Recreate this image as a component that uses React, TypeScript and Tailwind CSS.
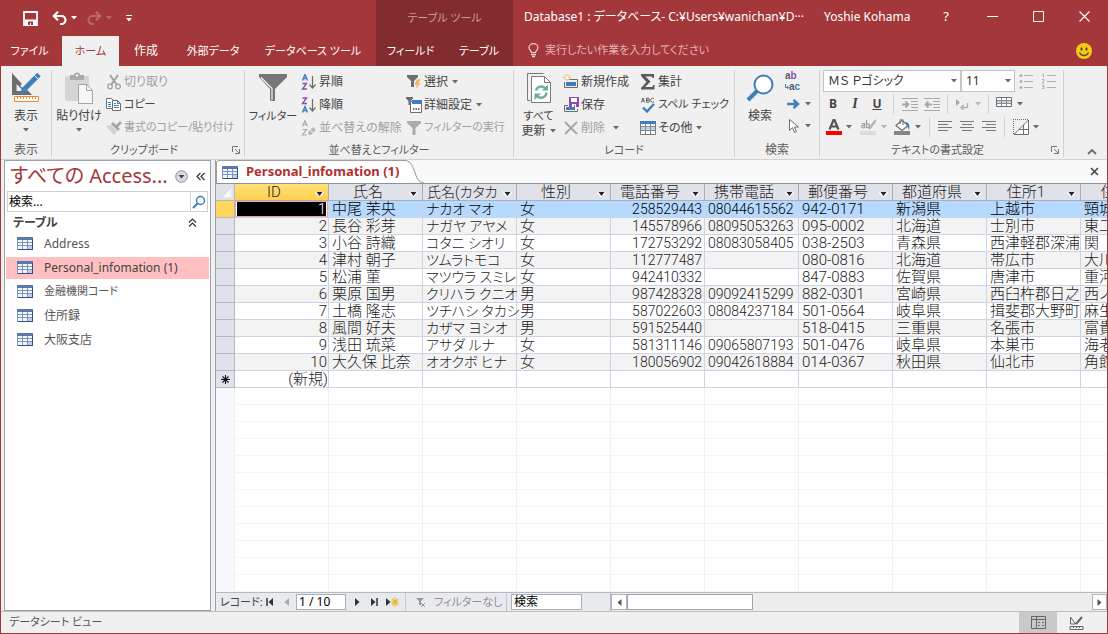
import type { ReactNode } from "react";

const uiFont = "font-['Noto_Sans','Noto_Sans_CJK_JP',sans-serif] [font-feature-settings:'palt']";

/* ---------- icons ---------- */

type IconProps = { w?: number; h?: number; children: ReactNode; className?: string };

function Icon({ w = 16, h = 16, children, className = "" }: IconProps) {
  return (
    <svg width={w} height={h} viewBox={`0 0 ${w} ${h}`} fill="none" aria-hidden="true" className={`shrink-0 ${className}`}>
      {children}
    </svg>
  );
}

function Caret({ className = "text-[#6a6a6a]" }: { className?: string }) {
  return (
    <Icon w={6} h={4} className={className}>
      <path d="M0 0h6L3 3.5z" fill="currentColor" />
    </Icon>
  );
}

const SaveTitle = () => (
  <Icon w={15} h={15}>
    <path d="M1 1h13v13H1z" stroke="#fff" strokeWidth="1.8" />
    <path d="M2 8.500h11V14H2z" fill="#fff" />
    <path d="M5 10.5h5V14H8v-2H7v2H5z" fill="#a4373a" />
  </Icon>
);
const Undo = ({ color }: { color: string }) => (
  <Icon w={15} h={14}>
    <path d="M2 5h7.5a4 4 0 0 1 0 8H8" stroke={color} strokeWidth="2.200" />
    <path d="M6 0.8 1.8 5 6 9.2" stroke={color} strokeWidth="2.200" />
  </Icon>
);
const Bulb = () => (
  <Icon w={11} h={15}>
    <path d="M3.5 9.5C3.500 8 1 7 1 4.700a4.500 4 0 0 1 9 0C10 7 7.500 8 7.500 9.500z" stroke="#f0d5d6" strokeWidth="1.200" />
    <path d="M3 11.500h5M4 13.500h3" stroke="#f0d5d6" strokeWidth="1.300" />
  </Icon>
);
const Smile = () => (
  <Icon w={16} h={16}>
    <circle cx="8" cy="8" r="8" fill="#fcc90f" />
    <ellipse cx="5.500" cy="6" rx="1.100" ry="1.700" fill="#4a4a4a" />
    <ellipse cx="10.500" cy="6" rx="1.100" ry="1.700" fill="#4a4a4a" />
    <path d="M3.500 9.500c1.500 4 7.500 4 9 0" stroke="#4a4a4a" strokeWidth="1.300" />
  </Icon>
);
const DesignView = () => (
  <Icon w={32} h={32}>
    <path d="M2 1v22h20zM6.500 12l7 7H6.500z" fill="#6d6d6d" fillRule="evenodd" />
    <path d="M28 1 13 16.500" stroke="#f0f0f0" strokeWidth="8" />
    <path d="M29 2.500 14.500 17" stroke="#3f7dbd" strokeWidth="5" />
    <path d="m12.500 15 4 4-7 4z" fill="#3f7dbd" />
    <path d="m24.500 3.500 4 4" stroke="#f0f0f0" strokeWidth="1" />
    <path d="M4.500 24.500h24v5h-24z" fill="#fff" stroke="#ee8a36" />
    <path d="M7.500 25v2M10.500 25v2M13.500 25v2M16.500 25v2M19.500 25v2M22.500 25v2M25.500 25v2" stroke="#ee8a36" />
  </Icon>
);
const Paste = () => (
  <Icon w={32} h={32}>
    <rect x="2" y="4" width="24" height="25" rx="1.500" fill="#d5d4d6" />
    <path d="M7 3h4a3 2.500 0 0 1 6 0h4v5H7z" fill="#aaa9ab" />
    <circle cx="14" cy="3.500" r="1.200" fill="#f0f0f0" />
    <path d="M15.500 12.500h8l6 6v13h-14z" fill="#f9f5f8" stroke="#a5a5a5" />
    <path d="M23.500 12.500v6h6" stroke="#a5a5a5" />
  </Icon>
);
const Cut = () => (
  <Icon>
    <path d="m4 1 7 10M12 1 5 11" stroke="#a2a2a2" strokeWidth="2" />
    <circle cx="4" cy="12.500" r="2.300" stroke="#a2a2a2" strokeWidth="1.300" />
    <circle cx="12" cy="12.500" r="2.300" stroke="#a2a2a2" strokeWidth="1.300" />
  </Icon>
);
const Copy = () => (
  <Icon>
    <path d="M.5 1.500h5l3 3v7h-8z" fill="#fff" stroke="#6d6d6d" />
    <path d="M2 5.500h3M2 7.500h3M2 9.500h3" stroke="#3f7dbd" />
    <path d="M6.500 3.500h5l3 3v7h-8z" fill="#fff" stroke="#6d6d6d" />
    <path d="M11.500 3.500v3h3" stroke="#6d6d6d" />
    <path d="M8 8.500h5M8 10.500h5M8 6.500h2" stroke="#3f7dbd" />
  </Icon>
);
const Painter = () => (
  <Icon>
    <path d="m0 6 5-1 6 6-3 4z" fill="#d2d2d2" />
    <path d="m5 4 7 7 2-2-7-7z" fill="#a6a6a6" />
    <path d="m9 6 5-5 2 2-5 5z" fill="#a6a6a6" />
  </Icon>
);
const Funnel = () => (
  <Icon w={30} h={30}>
    <path d="M1 1h28v3L17 16v12h-4l-1-1V16L1 4z" fill="#777" />
    <path d="M3 4.500 14 15.500V27" stroke="#f4f4f4" strokeWidth="1.200" />
  </Icon>
);
const SmallFunnel = ({ color = "#aaa" }: { color?: string }) => (
  <Icon>
    <path d="M1 1h14v2l-5.500 5v7h-3V8L1 3z" fill={color} />
  </Icon>
);
const A_STROKE = "M1.500 6.500 4 .5l2.500 6M2.500 4.500h3";
const Sort = ({ desc = false }: { desc?: boolean }) => (
  <Icon>
    <path d={A_STROKE} stroke="#3f7dbd" strokeWidth="1.400" transform={desc ? "translate(0 9)" : undefined} />
    <path d="M1.500 9.500h4L1.500 15h4.500" stroke="#8b4fa8" strokeWidth="1.400" transform={desc ? "translate(0 -8.500)" : undefined} />
    <path d="M11.500 2v12M8.500 10.500l3 3.500 3-3.500" stroke="#6a6a6a" strokeWidth="1.200" />
  </Icon>
);
const ClearSort = () => (
  <Icon>
    <path d={A_STROKE} stroke="#aaa" strokeWidth="1.200" />
    <path d="M1.500 9.500h4L1.500 15h4.500" stroke="#aaa" strokeWidth="1.200" />
    <path d="m7 12 5-5 3 3-5 5H8z" fill="#b8b8b8" />
    <path d="m9 10 3 3" stroke="#f0f0f0" />
  </Icon>
);
const SelectFilter = () => (
  <Icon>
    <path d="M1 1h11v2L8 7v6H5V7L1 3z" fill="#6d6d6d" />
    <path d="M11 5h4l-2 4h2l-6 7 1.500-5H8z" fill="#efb765" stroke="#f0f0f0" strokeWidth=".5" />
  </Icon>
);
const AdvancedFilter = () => (
  <Icon>
    <path d="M0 0h7v1.500L4.500 4v4h-2V4L0 1.500z" fill="#6d6d6d" />
    <path d="M4.500 4.500h11v11h-11z" fill="#fff" stroke="#6d6d6d" />
    <path d="M6 3h10v4H6z" fill="#3f7dbd" />
    <path d="M7 11h1.500v2H7zM9.500 11H11v2H9.500zM12 11h1.500v2H12z" fill="#6d6d6d" />
  </Icon>
);
const RefreshAll = () => (
  <Icon w={26} h={32}>
    <path d="M4.500 28.500h-3v-27h16" stroke="#7a7a7a" />
    <path d="M5.500 4.500h13l6 6v20h-19z" fill="#fff" stroke="#7a7a7a" />
    <path d="M18.500 4.500v6h6" stroke="#7a7a7a" />
    <path d="M10 18.500a5.500 5.500 0 0 1 9.500-2M20.500 20.500a5.500 5.500 0 0 1-9.500 3.500" stroke="#6fae93" strokeWidth="2.400" />
    <path d="M22 12.500v6h-6zM8.500 28v-6.500H15z" fill="#6fae93" />
  </Icon>
);
const NewRecord = () => (
  <Icon>
    <path d="M6 5.500h8.500v8H1.500V8" stroke="#6d6d6d" />
    <path d="M3 8h10v4H3z" fill="#3f7dbd" />
    <path d="M4 0v7M0 3.500h8M1.500 1l5 5M6.500 1l-5 5" stroke="#efb765" />
    <circle cx="4" cy="3.500" r="1.500" fill="#fff" />
  </Icon>
);
const SaveRecord = () => (
  <Icon>
    <path d="M5 8.500H1.500v6h13V12" stroke="#6d6d6d" />
    <path d="M3 10h9v3H3z" fill="#3f7dbd" />
    <path d="M6 0h10v10H6z" fill="#8b4fa8" />
    <path d="M8 1h6v4H8zM9 7h4v3h-1V8h-1v2H9z" fill="#fff" />
  </Icon>
);
const Delete = () => (
  <Icon>
    <path d="m2 2 12 12M14 2 2 14" stroke="#a8a8a8" strokeWidth="2.200" />
  </Icon>
);
const Sigma = () => (
  <Icon>
    <path d="M1 0h13v4h-1.500L12 2.500H5.500l5 5-5.500 5.500h7.500l.5-2h1.500v4.500H1V14l5.500-6L1 2z" fill="#5a5a5a" />
  </Icon>
);
const Spell = () => (
  <Icon>
    <path d="M1.500 5.500 3 1l1.500 4.500M2 4h2M6.500 5.300V1.200h1.800a1 1 0 0 1 0 2H6.500h2a1 1 0 0 1 0 2.100zM14 1.800a2 2 0 1 0 0 2.900" stroke="#5a5a5a" strokeWidth=".9" />
    <path d="m3 10.500 4 4L14 7" stroke="#3f7dbd" strokeWidth="2.400" />
  </Icon>
);
const MoreTable = () => (
  <Icon>
    <path d="M.5 1.500h15v13H.5z" fill="#fff" stroke="#7a7a7a" />
    <path d="M0 1h16v3H0z" fill="#3f7dbd" />
    <path d="M1 7h14v3H1z" fill="#bcd3ea" />
    <path d="M5.500 4v10M10.500 4v10M1 6.500h14M1 10.500h14" stroke="#8a8a8a" />
  </Icon>
);
const FindBig = () => (
  <Icon w={28} h={28}>
    <circle cx="17.500" cy="10.500" r="9" fill="#fff" stroke="#3f7dbd" strokeWidth="2" />
    <path d="M11 17 2 26" stroke="#3f7dbd" strokeWidth="4" />
  </Icon>
);
const GoTo = () => (
  <Icon>
    <path d="M2 8h10M8.500 4l4.500 4-4.500 4" stroke="#3f7dbd" strokeWidth="2.400" />
  </Icon>
);
const Pointer = () => (
  <Icon>
    <path d="M4.500 1.500v11l3-3 2 5 2-1-2-4.500h4z" fill="#fff" stroke="#6d6d6d" />
  </Icon>
);
const Bullets = () => (
  <Icon className="text-[#b0b0b0]">
    <path d="M5 2.500h9M5 8.500h9M5 14.500h9" stroke="currentColor" />
    <circle cx="2" cy="2.500" r="1.500" fill="currentColor" />
    <circle cx="2" cy="8.500" r="1.500" fill="currentColor" />
    <circle cx="2" cy="14.500" r="1.500" fill="currentColor" />
  </Icon>
);
const Numbers = () => (
  <Icon className="text-[#b0b0b0]">
    <path d="M6 2.500h9M6 8.500h9M6 14.500h9M1 1.500h1.500v3M1 6.500h2v1.500L1 10h2M1 12.500h2V15.500H1M1.500 14H3" stroke="currentColor" />
  </Icon>
);
const Indent = ({ out = false }: { out?: boolean }) => (
  <Icon className="text-[#a8a8a8]">
    <path d="M0 2.500h16M0 14.500h16M9 5.500h7M9 8.500h7M9 11.500h7" stroke="currentColor" />
    {out ? (
      <path d="M8 8.500H2M4.500 5.500l-3 3 3 3" stroke="currentColor" strokeWidth="1.800" />
    ) : (
      <path d="M0 8.500h6M3.500 5.500l3 3-3 3" stroke="currentColor" strokeWidth="1.800" />
    )}
  </Icon>
);
const Direction = () => (
  <Icon w={14}>
    <path d="M1 3v7l4-3.500z" fill="#a8a8a8" />
    <path d="M12.500 7v4.500H6M8.500 9 6 11.500 8.500 14" stroke="#b0b0b0" strokeWidth="1.300" />
  </Icon>
);
const GridLines = () => (
  <Icon>
    <path d="M.5 1.500h15v9H.5z" fill="#fff" stroke="#6d6d6d" />
    <path d="M1 5h14v3H1z" fill="#bcd3ea" />
    <path d="M5.500 2v8M10.500 2v8M1 4.500h14M1 7.500h14" stroke="#8a8a8a" />
  </Icon>
);
const Highlight = () => (
  <Icon>
    <path d="M1.500 4.500h3v4.500M4.500 6.500a1.800 1.300 0 1 0 0 2M6.500 1v8M6.500 5.500a1.800 1.800 0 1 1 0 2.500" stroke="#a0a0a0" strokeWidth="1.200" />
    <path d="m16 1-7 9" stroke="#b5b5b5" strokeWidth="2.500" />
    <path d="M0 12h16v4H0z" fill="#dcdadd" />
  </Icon>
);
const Bucket = () => (
  <Icon>
    <path d="m2 6.500 6-5 6 5-6 5z" fill="#fff" stroke="#6d6d6d" strokeWidth="1.200" />
    <path d="M6 5V1.500a1.500 1.500 0 0 1 3 0V6" stroke="#6d6d6d" />
    <path d="M11 3c4 0 5 3 4 8l-2-4z" fill="#3f7dbd" />
    <path d="M0 12h16v4H0z" fill="#858585" />
  </Icon>
);
const FontColor = () => (
  <Icon>
    <path d="M3.500 10.500 7.500 1h1l4 9.500M5 7.500h6" stroke="#555" strokeWidth="2.200" />
    <path d="M0 12h16v4H0z" fill="#f00" />
  </Icon>
);
const Align = ({ d }: { d: string }) => (
  <Icon w={14}>
    <path d={d} stroke="#777" />
  </Icon>
);
const AltRow = () => (
  <Icon>
    <path d="M0 .5h15M.5 0v15" stroke="#6d6d6d" strokeDasharray="1 1" />
    <path d="M1 15.500 15.500 1v14.500z" fill="#fff" stroke="#6d6d6d" />
    <path d="M6 10.500h9M10.500 6v9" stroke="#6d6d6d" />
  </Icon>
);
const TableIcon = () => (
  <Icon w={16} h={13}>
    <path d="M0 0h16v13H0z" fill="#7b94bb" />
    <path d="M0 0h16v3H0z" fill="#5a79ab" />
    <path d="M15 2h1v11H1v-1h14z" fill="#2f4f86" />
    <path d="M1 3h4v2H1zM6 3h4v2H6zM11 3h4v2h-4zM1 6h4v2H1zM6 6h4v2H6zM11 6h4v2h-4zM1 9h4v3H1zM6 9h4v3H6z" fill="#f2f6fc" />
    <path d="M11 9h4v3h-4z" fill="#bcd0ec" />
  </Icon>
);
const Launcher = () => (
  <Icon w={8} h={8}>
    <path d="M.5 6V.5H6M3 3l4 4M7.500 3v4.500H3" stroke="#777" />
  </Icon>
);
const Chevrons = ({ d }: { d: string }) => (
  <Icon w={9} h={9}>
    <path d={d} stroke="#333" strokeWidth="1.200" />
  </Icon>
);

/* ---------- ribbon parts ---------- */

const labelSize = (label: string) => (/[ァ-ヶー]/.test(label) ? "text-[11px]" : "text-xs");

function Group({ label, width, launcher = false, children }: { label: string; width: string; launcher?: boolean; children: ReactNode }) {
  return (
    <section aria-label={label} className={`mt-1 mb-0.5 flex shrink-0 flex-col border-r border-[#d2d2d2] ${width}`}>
      <div className="flex h-[72px] shrink-0">{children}</div>
      <div className="flex h-[15px] items-center px-1 leading-[15px]">
        <span className={`flex-1 text-center text-[#5c5c5c] ${labelSize(label)} leading-[15px]`}>{label}</span>
        {launcher && (
          <button type="button" aria-label={`${label}の詳細`}>
            <Launcher />
          </button>
        )}
      </div>
    </section>
  );
}

function BigButton({ icon, label, width, caret = false }: { icon: ReactNode; label: string; width: string; caret?: boolean }) {
  return (
    <button type="button" className={`flex flex-col items-center pt-0.5 ${width}`}>
      <span className="flex h-8 items-center">{icon}</span>
      <span className={`mt-[3px] whitespace-nowrap ${labelSize(label)} leading-[18px]`}>{label}</span>
      {caret && <Caret className="mt-[3px] text-[#6a6a6a]" />}
    </button>
  );
}

function SmallButton({ icon, label, caret = false, disabled = false }: { icon: ReactNode; label: string; caret?: boolean; disabled?: boolean }) {
  return (
    <button type="button" disabled={disabled} className={`flex h-[23px] items-center gap-0.5 whitespace-nowrap ${labelSize(label)} ${disabled ? "text-[#a0a0a0]" : "text-[#444]"}`}>
      {icon}
      <span>{label}</span>
      {caret && (
        <span className="pl-0.5">
          <Caret />
        </span>
      )}
    </button>
  );
}

function Tool({ label, width, caret = false, dim = false, children }: { label: string; width: string; caret?: boolean; dim?: boolean; children: ReactNode }) {
  return (
    <button type="button" aria-label={label} className={`flex h-[22px] items-center justify-between ${width}`}>
      {children}
      {caret && <Caret className={dim ? "text-[#b5b5b5]" : "text-[#6a6a6a]"} />}
    </button>
  );
}

const Sep = ({ className = "" }: { className?: string }) => <span className={`h-5 w-px bg-[#d2d2d2] ${className}`} />;

function Ribbon() {
  return (
    <div className="flex h-[94px] shrink-0 border-b border-[#d2d2d2] bg-[#f0f0f0] text-xs text-[#444]">
      <Group label="表示" width="w-[51px]">
        <BigButton icon={<DesignView />} label="表示" width="w-full" caret />
      </Group>
      <Group label="クリップボード" width="w-[193px]" launcher>
        <BigButton icon={<Paste />} label="貼り付け" width="w-[54px]" caret />
        <div className="flex flex-col">
          <SmallButton icon={<Cut />} label="切り取り" disabled />
          <SmallButton icon={<Copy />} label="コピー" />
          <SmallButton icon={<Painter />} label="書式のコピー/貼り付け" disabled />
        </div>
      </Group>
      <Group label="並べ替えとフィルター" width="w-[269px]">
        <BigButton icon={<Funnel />} label="フィルター" width="w-14" />
        <div className="flex w-[105px] flex-col">
          <SmallButton icon={<Sort />} label="昇順" />
          <SmallButton icon={<Sort desc />} label="降順" />
          <SmallButton icon={<ClearSort />} label="並べ替えの解除" disabled />
        </div>
        <div className="flex flex-col">
          <SmallButton icon={<SelectFilter />} label="選択" caret />
          <SmallButton icon={<AdvancedFilter />} label="詳細設定" caret />
          <SmallButton icon={<SmallFunnel />} label="フィルターの実行" disabled />
        </div>
      </Group>
      <Group label="レコード" width="w-[221px]">
        <button type="button" className="flex w-[49px] flex-col items-center pt-0.5">
          <RefreshAll />
          <span className="mt-1 text-[11px] leading-[15px]">すべて</span>
          <span className="flex items-center gap-1 leading-[15px]">
            更新
            <Caret />
          </span>
        </button>
        <div className="flex w-[77px] flex-col">
          <SmallButton icon={<NewRecord />} label="新規作成" />
          <SmallButton icon={<SaveRecord />} label="保存" />
          <div className="flex items-center gap-2">
            <SmallButton icon={<Delete />} label="削除" disabled />
            <button type="button" aria-label="削除のオプション">
              <Caret />
            </button>
          </div>
        </div>
        <div className="flex flex-col">
          <SmallButton icon={<Sigma />} label="集計" />
          <SmallButton icon={<Spell />} label="スペル チェック" />
          <SmallButton icon={<MoreTable />} label="その他" caret />
        </div>
      </Group>
      <Group label="検索" width="w-[85px]">
        <BigButton icon={<FindBig />} label="検索" width="w-[50px]" />
        <div className="flex flex-col">
          <button type="button" aria-label="置換" className="flex h-[23px] w-[26px] flex-col items-start font-['Liberation_Sans',sans-serif] text-[10px] font-bold leading-[11px] text-[#5a5a5a]">
            <span>
              a<span className="text-[#8b4fa8]">b</span>
            </span>
            <span className="flex items-center">
              <Icon w={4} h={6}><path d="M.5 0v3.500h2" stroke="#3f7dbd" /><path d="M2 1.500v4l2-2z" fill="#3f7dbd" /></Icon>
              a<span className="text-[#3f7dbd]">c</span>
            </span>
          </button>
          <Tool label="ジャンプ" width="w-[26px]" caret>
            <GoTo />
          </Tool>
          <Tool label="選択" width="w-[26px]" caret>
            <Pointer />
          </Tool>
        </div>
      </Group>
      <Group label="テキストの書式設定" width="w-[244px]" launcher>
        <div className="flex flex-col pl-[3px]">
          <div className="flex h-[22px] items-center">
            <label className="relative flex items-center">
              <select aria-label="フォント" className="h-[22px] w-[138px] appearance-none border border-[#c6c6c6] bg-white px-1 text-xs text-[#333]">
                <option>ＭＳ Ｐゴシック</option>
              </select>
              <Caret className="pointer-events-none absolute right-1 text-[#6a6a6a]" />
            </label>
            <label className="relative flex items-center">
              <select aria-label="フォント サイズ" className="h-[22px] w-[54px] appearance-none border border-[#c6c6c6] bg-white px-1 text-xs text-[#333]">
                <option>11</option>
              </select>
              <Caret className="pointer-events-none absolute right-1 text-[#6a6a6a]" />
            </label>
            <span className="flex gap-1.5 pl-1">
              <Tool label="箇条書き" width="w-4">
                <Bullets />
              </Tool>
              <Tool label="段落番号" width="w-4">
                <Numbers />
              </Tool>
            </span>
          </div>
          <div className="flex h-[23px] items-center gap-1.5 pl-0.5">
            <button type="button" className="w-4 font-bold">B</button>
            <button type="button" className="w-4 font-['Liberation_Serif'] text-sm font-bold italic">I</button>
            <button type="button" className="w-4 font-bold underline">U</button>
            <Sep className="mx-0.5" />
            <Tool label="インデント" width="w-4"><Indent /></Tool>
            <Tool label="インデント解除" width="w-4"><Indent out /></Tool>
            <Sep className="mx-px" />
            <Tool label="文字列の方向" width="w-[26px]" caret dim><Direction /></Tool>
            <Sep className="mx-px" />
            <Tool label="枠線" width="w-[27px]" caret><GridLines /></Tool>
          </div>
          <div className="flex h-[23px] items-center pl-[3px]">
            <Tool label="フォントの色" width="w-[26px]" caret><FontColor /></Tool>
            <span className="w-2" />
            <Tool label="蛍光ペンの色" width="w-[27px]" caret dim><Highlight /></Tool>
            <span className="w-[7px]" />
            <Tool label="背景色" width="w-[27px]" caret><Bucket /></Tool>
            <span className="flex items-center gap-2 pl-2">
              <Sep />
              <Tool label="左揃え" width="w-3.5"><Align d="M0 2.500h14M0 5.500h10M0 8.500h14M0 11.500h10" /></Tool>
              <Tool label="中央揃え" width="w-3.5"><Align d="M0 2.500h14M2 5.500h10M0 8.500h14M2 11.500h10" /></Tool>
              <Tool label="右揃え" width="w-3.5"><Align d="M0 2.500h14M4 5.500h10M0 8.500h14M4 11.500h10" /></Tool>
              <Sep />
              <Tool label="交互の行の色" width="w-[26px]" caret><AltRow /></Tool>
            </span>
          </div>
        </div>
      </Group>
      <div className="flex flex-1 items-end justify-end pr-2.5 pb-1">
        <button type="button" aria-label="リボンを折りたたむ">
          <Icon w={10} h={7}>
            <path d="m1 6 4-4 4 4" stroke="#6a6a6a" strokeWidth="1.800" />
          </Icon>
        </button>
      </div>
    </div>
  );
}

/* ---------- title bar ---------- */

function TitleBar() {
  return (
    <header className="flex h-[66px] shrink-0 bg-[#a4373a] text-xs text-white">
      <div className="flex w-[375px] shrink-0 flex-col">
        <div className="flex h-9 items-center pl-[22px]">
          <button type="button" aria-label="上書き保存"><SaveTitle /></button>
          <button type="button" aria-label="元に戻す" className="flex items-center gap-1 pl-3.5">
            <Undo color="#fff" />
            <Caret className="text-white" />
          </button>
          <button type="button" aria-label="やり直し" disabled className="flex items-center gap-1 pl-2.5">
            <span className="-scale-x-100"><Undo color="#b9666a" /></span>
            <Caret className="text-[#b9666a]" />
          </button>
          <button type="button" aria-label="クイック アクセスのカスタマイズ" className="pl-3.5">
            <Icon w={6} h={7}>
              <path d="M0 .5h6" stroke="#fff" />
              <path d="M0 3h6L3 6.500z" fill="#fff" />
            </Icon>
          </button>
        </div>
        <nav className="flex h-[30px] whitespace-nowrap text-[11px]">
          <button type="button" className="w-[61px] pr-1">ファイル</button>
          <button type="button" className="w-[57px] bg-[#f0f0f0] text-[#a4373a]">ホーム</button>
          <button type="button" className="w-[54px] text-xs">作成</button>
          <button type="button" className="w-20">外部データ</button>
          <button type="button" className="w-[120px]">データベース ツール</button>
        </nav>
      </div>
      <div className="flex w-[137px] shrink-0 flex-col bg-[#822c2e] text-[11px]">
        <div className="flex h-9 items-center justify-center text-[#cf9a9c]">テーブル ツール</div>
        <nav className="flex h-[30px] whitespace-nowrap">
          <button type="button" className="w-[69px]">フィールド</button>
          <button type="button" className="w-[68px]">テーブル</button>
        </nav>
      </div>
      <div className="flex min-w-0 flex-1 flex-col">
        <div className="flex h-[33px] items-center">
          <h1 className="min-w-0 flex-1 truncate pl-[11px]">Database1 : データベース- C:¥Users¥wanichan¥D···</h1>
          <span className="w-[99px] shrink-0">Yoshie Kohama</span>
          <div className="flex shrink-0 items-center">
            <button type="button" className="w-[46px] text-[13px]">?</button>
            <button type="button" aria-label="最小化" className="flex w-[46px] justify-center">
              <Icon w={11} h={11}><path d="M0 5.500h11" stroke="#fff" /></Icon>
            </button>
            <button type="button" aria-label="最大化" className="flex w-[46px] justify-center">
              <Icon w={11} h={11}><path d="M.5.5h10v10H.5z" stroke="#fff" /></Icon>
            </button>
            <button type="button" aria-label="閉じる" className="flex w-[46px] justify-center">
              <Icon w={11} h={11}><path d="m.5.500 10 10M10.500.500l-10 10" stroke="#fff" strokeWidth="1.100" /></Icon>
            </button>
          </div>
        </div>
        <div className="flex flex-1 items-center justify-between pt-0.5 pr-[15px] pl-[15px]">
          <button type="button" className="flex items-center gap-1.5 text-[11px] text-[#e0b4b6]">
            <Bulb />
            実行したい作業を入力してください
          </button>
          <button type="button" aria-label="フィードバック"><Smile /></button>
        </div>
      </div>
    </header>
  );
}

/* ---------- navigation pane ---------- */

const tables = ["Address", "Personal_infomation (1)", "金融機関コード", "住所録", "大阪支店"];

function NavPane() {
  return (
    <aside className="flex w-[207px] shrink-0 flex-col border border-[#9aa1ad] bg-white px-px text-[#555]">
      <div className="flex h-[30px] items-center pr-1 pl-1">
        <h2 className="flex-1 whitespace-nowrap text-xl text-[#a4373a]">すべての Access...</h2>
        <button type="button" aria-label="オブジェクトの種類" className="mr-2">
          <Icon w={13} h={13}>
            <circle cx="6.500" cy="6.500" r="5.800" fill="#d9dbe0" stroke="#8a8f99" />
            <path d="M3.500 5h6l-3 3.500z" fill="#3d4450" />
          </Icon>
        </button>
        <button type="button" aria-label="ナビゲーション ウィンドウを閉じる">
          <Chevrons d="M4.500 1 1 4.500 4.500 8M8.500 1 5 4.500 8.500 8" />
        </button>
      </div>
      <div className="ml-px flex h-[21px] w-[201px] border border-[#d0d0d0] text-black">
        <input aria-label="ナビゲーションの検索" defaultValue="検索..." className="min-w-0 flex-1 px-px text-xs outline-none" />
        <button type="button" aria-label="検索" className="flex w-[17px] items-center justify-center border-l border-[#d0d0d0]">
          <Icon w={14} h={14}>
            <circle cx="8.500" cy="5.500" r="4" stroke="#3f7dbd" strokeWidth="1.500" />
            <path d="M5.500 8.500 1 13" stroke="#3f7dbd" strokeWidth="2" />
          </Icon>
        </button>
      </div>
      <div className="flex h-5 items-center justify-between pt-px pr-3 pl-[7px] text-xs font-bold text-[#444]">
        <span>テーブル</span>
        <button type="button" aria-label="折りたたむ">
          <Chevrons d="M1 4.500 4.500 1 8 4.500M1 8.500 4.500 5 8 8.500" />
        </button>
      </div>
      <ul className="text-xs">
        {tables.map((name, i) => (
          <li key={name} className="flex h-6 items-center pb-px">
            <a href="#" aria-current={i === 1 ? "page" : undefined} className={`flex h-[22px] w-full items-center gap-[11px] pl-[11px] ${i === 1 ? "bg-[#ffc0c2] text-[#444]" : ""}`}>
              <TableIcon />
              <span className={labelSize(name)}>{name}</span>
            </a>
          </li>
        ))}
      </ul>
    </aside>
  );
}

/* ---------- datasheet ---------- */

const columns = ["ID", "氏名", "氏名(カタカ", "性別", "電話番号", "携帯電話", "郵便番号", "都道府県", "住所1", "住所2"];

const rows = [
  ["1", "中尾 茉央", "ナカオ マオ", "女", "258529443", "08044615562", "942-0171", "新潟県", "上越市", "頸城区"],
  ["2", "長谷 彩芽", "ナガヤ アヤメ", "女", "145578966", "08095053263", "095-0002", "北海道", "士別市", "東二条"],
  ["3", "小谷 詩織", "コタニ シオリ", "女", "172753292", "08083058405", "038-2503", "青森県", "西津軽郡深浦", "関"],
  ["4", "津村 朝子", "ツムラトモコ", "女", "112777487", "", "080-0816", "北海道", "帯広市", "大川町"],
  ["5", "松浦 菫", "マツウラ スミレ", "女", "942410332", "", "847-0883", "佐賀県", "唐津市", "重河町"],
  ["6", "栗原 国男", "クリハラ クニオ", "男", "987428328", "09092415299", "882-0301", "宮崎県", "西臼杵郡日之", "西ノ"],
  ["7", "土橋 隆志", "ツチハシ タカシ", "男", "587022603", "08084237184", "501-0564", "岐阜県", "揖斐郡大野町", "麻生"],
  ["8", "風間 好夫", "カザマ ヨシオ", "男", "591525440", "", "518-0415", "三重県", "名張市", "富貴"],
  ["9", "浅田 琉菜", "アサダ ルナ", "女", "581311146", "09065807193", "501-0476", "岐阜県", "本巣市", "海老"],
  ["10", "大久保 比奈", "オオクボ ヒナ", "女", "180056902", "09042618884", "014-0367", "秋田県", "仙北市", "角館"],
];

function cellClass(r: number, c: number) {
  if (r === 0 && c === 0) return "border border-[#f5a0a2] bg-white px-px text-right";
  if (c === 0) return "pr-px pt-px text-right leading-[15px]";
  if (c === 2) return "px-[3px] pt-px text-sm leading-[15px]";
  if (c === 4) return "px-0.5 pt-px text-right text-sm leading-[15px]";
  if (c === 5) return "px-[3px] pt-px text-sm leading-[15px]";
  return "pt-px pl-[3px] leading-[15px]";
}

function HeaderArrow() {
  return (
    <Icon w={9} h={5}>
      <path d="M0 0h9v1L4.500 5 0 1z" fill="#fff" />
      <path d="M1.500 0h6l-3 4z" fill="#222" />
    </Icon>
  );
}

function Datasheet() {
  return (
    <div className="flex min-h-0 flex-1 flex-col overflow-hidden border-t border-[#8d939c] bg-white">
      <table className="w-[959px] shrink-0 table-fixed border-separate border-spacing-0 font-['Roboto','Noto_Sans_CJK_JP',sans-serif] text-[15px] font-light text-[#1c1c1c] [font-feature-settings:'palt']">
        <colgroup>
          <col className="w-[19px]" />
          {columns.map((c) => (
            <col key={c} />
          ))}
        </colgroup>
        <thead>
          <tr className="h-[17px]">
            <th className="h-[17px] border-r border-b border-[#b4bac3] bg-[#dfe2e8] p-0">
              <div className="flex justify-end pr-0.5">
                <Icon w={11} h={11}><path d="M11 0v11H0z" fill="#f7f8fa" stroke="#c4cad2" strokeWidth=".5" /></Icon>
              </div>
            </th>
            {columns.map((c, i) => (
              <th key={c} className={`h-[17px] border-r border-b border-[#a9b0bb] p-0 font-light ${i === 0 ? "bg-linear-to-b from-[#ffe07a] to-[#ffd04a]" : "bg-[#dfe2e8]"}`}>
                <div className="flex h-4 items-center pr-1 leading-4">
                  <span className={`flex-1 whitespace-nowrap ${i === 2 ? "pl-1 text-left text-sm leading-4" : "text-center"}`}>{c}</span>
                  <button type="button" aria-label={`${c}の並べ替え`} className={i === 2 ? "pt-1" : "pt-1 pl-0.5"}><HeaderArrow /></button>
                </div>
              </th>
            ))}
          </tr>
        </thead>
        <tbody>
          {rows.map((row, r) => (
            <tr key={row[0]} className={`h-[17px] ${r === 0 ? "bg-[#b5d9ff] text-black" : r % 2 ? "bg-[#f3f3f3]" : "bg-white"}`}>
              <th scope="row" aria-label={`行 ${row[0]}`} className={`border-r border-b border-[#b4bac3] p-0 ${r === 0 ? "bg-[#ffd55a]" : "bg-[#dfe2e8]"}`} />
              {row.map((value, c) => (
                <td key={c} className="border-r border-b border-[#ccd5e4] p-0">
                  <div className={`h-4 whitespace-nowrap ${cellClass(r, c)}`}>
                    {r === 0 && c === 0 ? <span className="block h-3.5 bg-black leading-[14px] text-white">{value}</span> : value}
                  </div>
                </td>
              ))}
            </tr>
          ))}
          <tr className="h-[17px]">
            <th scope="row" aria-label="新しいレコード" className="border-r border-b border-[#b4bac3] bg-[#dfe2e8] p-0">
              <div className="flex justify-center">
                <Icon w={9} h={9}><path d="M4.500 0v9M0 4.500h9M1.500 1.500l6 6M7.500 1.500l-6 6" stroke="#111" strokeWidth="1.100" /></Icon>
              </div>
            </th>
            {columns.map((c, i) => (
              <td key={c} className="border-r border-b border-[#ccd5e4] p-0">
                <div className="h-4 pt-px text-right leading-[15px]">{i === 0 ? "(新規)" : ""}</div>
              </td>
            ))}
          </tr>
        </tbody>
      </table>
      <div className="flex flex-1 overflow-hidden">
        <div className="w-[19px] shrink-0 border-r border-[#eeeef6] bg-[#f8f8ff]" />
        <div className="flex-1 bg-[repeating-linear-gradient(to_right,transparent_0,transparent_93px,#efeff4_93px,#efeff4_94px),repeating-linear-gradient(to_bottom,transparent_0,transparent_16px,#f5f5f8_16px,#f5f5f8_17px)]" />
      </div>
    </div>
  );
}

function RecordBar() {
  return (
    <div className="flex h-[19px] shrink-0 items-center border-t border-[#b4bac3] bg-[#e9eaee] text-[11px] text-[#444]">
      <span className="w-[50px] whitespace-nowrap pl-1">レコード:</span>
      <button type="button" aria-label="先頭のレコード" className="w-[18px]">
        <Icon w={8} h={8}><path d="M1 0v8" stroke="#333" strokeWidth="1.500" /><path d="M7 0v8L2.500 4z" fill="#333" /></Icon>
      </button>
      <button type="button" aria-label="前のレコード" className="w-3">
        <Icon w={6} h={8}><path d="M5 0v8L.5 4z" fill="#a5a8ae" /></Icon>
      </button>
      <input aria-label="現在のレコード" defaultValue="1 / 10" className="h-4 w-[50px] border border-[#a9b0bb] bg-white px-0.5 text-xs text-black outline-none" />
      <span className="flex items-center gap-2 pl-2">
        <button type="button" aria-label="次のレコード"><Icon w={6} h={8}><path d="M1 0v8l4.500-4z" fill="#333" /></Icon></button>
        <button type="button" aria-label="最後のレコード" className="pl-0.5"><Icon w={8} h={8}><path d="M7 0v8" stroke="#333" strokeWidth="1.500" /><path d="M1 0v8l4.500-4z" fill="#333" /></Icon></button>
        <button type="button" aria-label="新しいレコード">
          <Icon w={13} h={10}>
            <path d="M0 1v8l4.500-4z" fill="#333" />
            <path d="M9 0v10M4.500 5H13M6 2l6 6M12 2 6 8" stroke="#eab92d" strokeWidth="1.200" />
          </Icon>
        </button>
      </span>
      <button type="button" disabled className="ml-1.5 flex h-full w-[102px] items-center gap-2 whitespace-nowrap border-x border-[#c6cad2] pl-2.5 text-[#909090]">
        <Icon w={10} h={9}><path d="M0 0h8L5 3v4H3V3z" fill="#999" /><path d="m5 5 4 4M9 5 5 9" stroke="#999" /></Icon>
        フィルターなし
      </button>
      <input aria-label="レコードの検索" defaultValue="検索" className="ml-1 h-4 w-[71px] border border-[#a9b0bb] bg-white px-0.5 text-xs text-black outline-none" />
      <div className="ml-7 flex h-full min-w-0 flex-1 items-center border-l border-[#b4bac3] bg-[#ededed]">
        <button type="button" aria-label="左へスクロール" className="flex h-4 w-4 items-center justify-center border border-[#b0b4bb] bg-white">
          <Icon w={5} h={7}><path d="M4.500 0v7L.5 3.500z" fill="#555" /></Icon>
        </button>
        <div className="flex-1">
          <div className="h-4 w-[126px] border border-[#a0a4ab] bg-white" />
        </div>
        <button type="button" aria-label="右へスクロール" className="flex h-4 w-[15px] items-center justify-center border border-[#b0b4bb] bg-white">
          <Icon w={5} h={7}><path d="M.5 0v7l4-3.500z" fill="#555" /></Icon>
        </button>
      </div>
    </div>
  );
}

function DocumentArea() {
  return (
    <main className="flex min-w-0 flex-1 flex-col border-l border-[#9aa1ad] bg-[#f9f9f9]">
      <div className="flex h-[23px] shrink-0 items-stretch justify-between">
        <div role="tablist" className="flex">
          <button type="button" role="tab" aria-selected="true" className="flex items-center gap-2 rounded-tl border-t border-l border-[#a39c98] bg-white px-[5px] text-[13px] font-bold text-[#b0302f]">
            <TableIcon />
            Personal_infomation (1)
          </button>
          <Icon w={20} h={23}>
            <path d="M0 0c6 0 7 3 10 10 3 8 4 13 9 13H0z" fill="#fff" />
            <path d="M0 .5c6 0 7 3 10 9.500 3 8 4 12.500 9.500 12.500" stroke="#8d939c" />
          </Icon>
        </div>
        <button type="button" aria-label="閉じる" className="pr-2">
          <Icon w={9} h={9}><path d="m1 1 7 7M8 1 1 8" stroke="#444" strokeWidth="1.600" /></Icon>
        </button>
      </div>
      <Datasheet />
      <RecordBar />
    </main>
  );
}

function StatusBar() {
  return (
    <footer className="flex h-[22px] shrink-0 items-center justify-between border-t border-[#c0c0c0] bg-[#f0f0f0] pl-2 text-[11px] text-[#555]">
      <span>データシート ビュー</span>
      <div className="flex h-full pr-3">
        <button type="button" aria-label="データシート ビュー" className="flex w-[38px] items-center justify-center bg-[#c9c9c9]">
          <Icon w={15} h={13}><path d="M.5.500h14v12H.5zM.5 3.500h14M5.500.500v12M7 6.500h2M11 6.500h2M7 9.500h2M11 9.500h2" stroke="#666" /></Icon>
        </button>
        <button type="button" aria-label="デザイン ビュー" className="flex w-[38px] items-center justify-center">
          <Icon w={15} h={14}><path d="M1.500 1v7h5zM1 10.500h13v3H1zM4.500 11v1M7.500 11v1M10.500 11v1" stroke="#666" /><path d="M13 1 7 8" stroke="#666" strokeWidth="2" /></Icon>
        </button>
      </div>
    </footer>
  );
}

export default function App() {
  return (
    <div className={`flex h-screen flex-col overflow-hidden border-x border-b border-[#a4373a] bg-[#f0f0f0] ${uiFont}`}>
      <TitleBar />
      <Ribbon />
      <div className="flex min-h-0 flex-1 gap-1 pl-[3px]">
        <NavPane />
        <DocumentArea />
      </div>
      <StatusBar />
    </div>
  );
}
